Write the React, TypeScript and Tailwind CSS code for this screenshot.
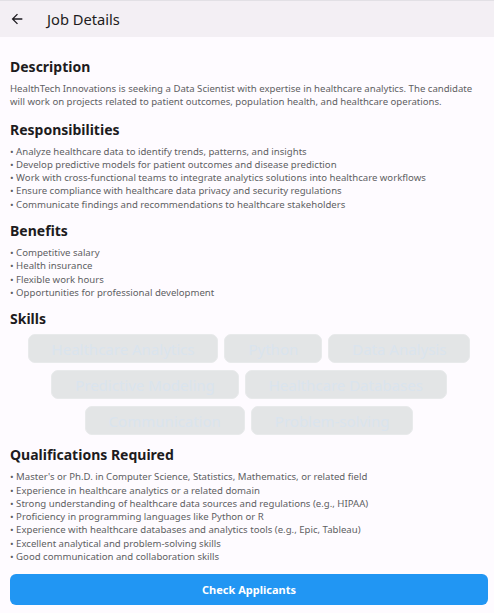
import React from "react";

const description =
  "HealthTech Innovations is seeking a Data Scientist with expertise in healthcare analytics. The candidate will work on projects related to patient outcomes, population health, and healthcare operations.";

const responsibilities = [
  "Analyze healthcare data to identify trends, patterns, and insights",
  "Develop predictive models for patient outcomes and disease prediction",
  "Work with cross-functional teams to integrate analytics solutions into healthcare workflows",
  "Ensure compliance with healthcare data privacy and security regulations",
  "Communicate findings and recommendations to healthcare stakeholders",
];

const benefits = [
  "Competitive salary",
  "Health insurance",
  "Flexible work hours",
  "Opportunities for professional development",
];

const skills = [
  "Healthcare Analytics",
  "Python",
  "Data Analysis",
  "Predictive Modeling",
  "Healthcare Databases",
  "Communication",
  "Problem-solving",
];

const qualifications = [
  "Master's or Ph.D. in Computer Science, Statistics, Mathematics, or related field",
  "Experience in healthcare analytics or a related domain",
  "Strong understanding of healthcare data sources and regulations (e.g., HIPAA)",
  "Proficiency in programming languages like Python or R",
  "Experience with healthcare databases and analytics tools (e.g., Epic, Tableau)",
  "Excellent analytical and problem-solving skills",
  "Good communication and collaboration skills",
];

function Heading({ children }: { children: React.ReactNode }) {
  return (
    <h2 className="text-[14px] font-bold leading-[19px] text-[#1d1b20]">{children}</h2>
  );
}

function BulletList({ items }: { items: string[] }) {
  return (
    <ul className="mt-[6px] text-[9.6px] leading-[13.3px] text-[#5f5f63]">
      {items.map((item) => (
        <li key={item}>• {item}</li>
      ))}
    </ul>
  );
}

export default function App() {
  return (
    <div
      className="flex h-[613px] w-[494px] flex-col bg-[#fefbff]"
      style={{ fontFamily: '"Noto Sans", "Open Sans", sans-serif' }}
    >
      {/* App bar */}
      <header className="flex h-[37px] shrink-0 items-center border-t border-[#e2e0e5] bg-[#f3eff4]">
        <svg
          className="ml-[9px] h-[16px] w-[16px] text-[#1d1b20]"
          viewBox="0 0 24 24"
          fill="currentColor"
        >
          <path d="M20 11H7.83l5.59-5.59L12 4l-8 8 8 8 1.41-1.41L7.83 13H20v-2z" />
        </svg>
        <span className="ml-[22px] text-[14.7px] leading-none text-[#1d1b20]">Job Details</span>
      </header>

      <main className="flex flex-col pl-[10px] pr-[6px] pt-[20px]">
        <Heading>Description</Heading>
        <p className="mt-[6px] text-[9.6px] leading-[13.3px] text-[#5f5f63]">{description}</p>

        <div className="mt-[11px]">
          <Heading>Responsibilities</Heading>
          <BulletList items={responsibilities} />
        </div>

        <div className="mt-[10px]">
          <Heading>Benefits</Heading>
          <BulletList items={benefits} />
        </div>

        <div className="mt-[10px]">
          <Heading>Skills</Heading>
          <div className="mt-[6px] flex flex-wrap justify-center gap-x-[6px] gap-y-[7px]">
            {skills.map((s) => (
              <span
                key={s}
                className="flex h-[29px] items-center rounded-[7px] border border-[#e8eaeb] bg-[#e3e5e6] px-[23px] text-[15px] text-[#dae4ee]"
              >
                {s}
              </span>
            ))}
          </div>
        </div>

        <div className="mt-[10px]">
          <Heading>Qualifications Required</Heading>
          <BulletList items={qualifications} />
        </div>

        <button className="mt-[11px] flex h-[31px] w-[478px] items-center justify-center rounded-[6px] bg-[#2196f3] text-[11px] font-bold text-white">
          Check Applicants
        </button>
      </main>
    </div>
  );
}
